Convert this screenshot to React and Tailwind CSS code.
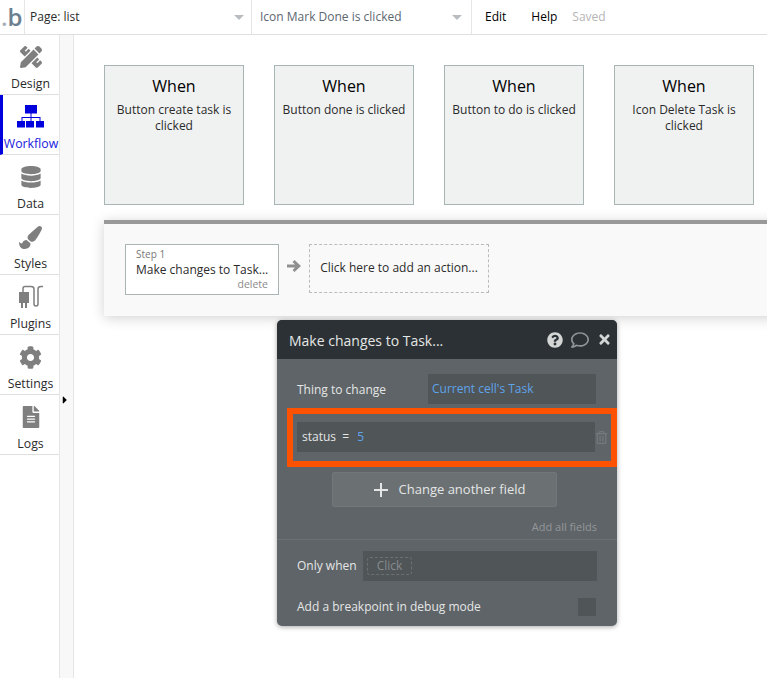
import { FaPencilRuler, FaDatabase, FaPaintBrush, FaCog, FaFileAlt, FaQuestionCircle, FaRegComment, FaTimes, FaRegTrashAlt, FaCaretRight } from "react-icons/fa";

function WorkflowIcon() {
  return (
    <svg width="28" height="24" viewBox="0 0 28 24" fill="#0000dd">
      <rect x="8" y="0" width="12" height="8.500" />
      <path d="M13.500 8h1v4h9v4h-1v-3h-8v3h-1v-3h-8v3h-1v-4h9z" />
      <rect x="0" y="16" width="8" height="6.500" />
      <rect x="9" y="16" width="8" height="6.500" />
      <rect x="19" y="16" width="8" height="6.500" />
    </svg>
  );
}

function PluginIcon() {
  return (
    <svg width="26" height="24" viewBox="0 0 26 24" fill="none">
      <path d="M1 7h10v11H9v5H7v-5H5v5H3v-5H1z" fill="#7f7f7f" />
      <path d="M5 7V3.500Q5 1.500 7 1.500H13Q16 1.500 16 4V19Q16 21 18 21T20 19V4Q20 1.500 23 1.500H25" stroke="#7f7f7f" strokeWidth="1.500" />
    </svg>
  );
}

function ArrowIcon() {
  return (
    <svg width="14" height="14" viewBox="0 0 14 14" fill="#8f8f8f" className="mt-[15px] shrink-0">
      <path d="M7.500 1 14 7l-6.500 6-2-2L8 8.500H0v-3h8L5.500 3z" />
    </svg>
  );
}

function PlusIcon() {
  return (
    <svg width="14" height="14" viewBox="0 0 14 14" fill="#e4e6e6" className="mr-[11px] shrink-0">
      <path d="M6 0h2v6h6v2H8v6H6V8H0V6h6z" />
    </svg>
  );
}

const navItems = [
  { label: "Design", icon: <FaPencilRuler size={22} color="#7f7f7f" /> },
  { label: "Workflow", icon: <WorkflowIcon />, active: true },
  { label: "Data", icon: <FaDatabase size={22} color="#7f7f7f" /> },
  { label: "Styles", icon: <FaPaintBrush size={23} color="#7f7f7f" /> },
  { label: "Plugins", icon: <PluginIcon /> },
  { label: "Settings", icon: <FaCog size={23} color="#7f7f7f" /> },
  { label: "Logs", icon: <FaFileAlt size={22} color="#7f7f7f" /> },
];

const events = [
  "Button create task is clicked",
  "Button done is clicked",
  "Button to do is clicked",
  "Icon Delete Task is clicked",
];

function Caret() {
  return <span className="h-0 w-0 border-x-[5px] border-t-[5px] border-x-transparent border-t-[#b9bdc2]" />;
}

export default function App() {
  return (
    <div className="flex h-[678px] w-[767px] flex-col overflow-hidden bg-white font-['Open_Sans',sans-serif] text-[12px] text-[#2b2b2b]">
      <header className="flex h-[35px] shrink-0 items-center border-b border-[#dfdfdf]">
        <div className="flex h-full w-[25px] items-center border-r border-[#e6e6e6] pl-[1px] text-[24px] leading-none font-semibold text-[#6b7f8f]">
          <span className="text-[#a3adb5]">.</span>b
        </div>
        <div className="flex h-full w-[227px] items-center justify-between border-r border-[#e6e6e6] pr-[7px] pl-[5px]">
          <span>Page: list</span>
          <Caret />
        </div>
        <div className="flex h-full w-[220px] items-center justify-between border-r border-[#e6e6e6] pr-[9px] pl-[8px] text-[#5c6670]">
          <span>Icon Mark Done is clicked</span>
          <Caret />
        </div>
        <span className="ml-[13px] text-black">Edit</span>
        <span className="ml-[25px] text-black">Help</span>
        <span className="ml-[15px] text-[#b5b5b5]">Saved</span>
      </header>

      <div className="flex min-h-0 flex-1">
        <nav className="w-[60px] shrink-0 border-r border-[#e6e6e6]">
          {navItems.map((item) => (
            <div
              key={item.label}
              className={`flex h-[60px] flex-col items-center border-b border-[#dfdfdf] pt-[4px] ${item.active ? "border-l-[3px] border-l-[#0000dd] text-[#2020dd]" : "pl-[2px] text-[#2b2b2b]"}`}
            >
              <div className="flex h-[36px] items-center">{item.icon}</div>
              <span className="text-[12.300px] leading-[17px]">{item.label}</span>
            </div>
          ))}
        </nav>

        <div className="flex w-[14px] shrink-0 items-center border-r border-[#e6e6e6] bg-[#f8f8f8] pb-[5px]">
          <FaCaretRight size={12} color="#000" className="mt-[92px] -ml-[1px]" />
        </div>

        <main className="min-w-0 flex-1 pt-[30px] pl-[30px]">
          <div className="flex gap-[30px]">
            {events.map((event) => (
              <div
                key={event}
                className="flex h-[140px] w-[140px] shrink-0 flex-col items-center border border-[#a9b5b5] bg-[#f0f2f2] px-[4px] pt-[8px] text-center"
              >
                <span className="text-[16px] leading-[24px] text-black">When</span>
                <span className="mt-[4px] leading-[16px]">{event}</span>
              </div>
            ))}
          </div>

          <div className="mt-[15px] flex h-[96px] w-[700px] items-start gap-[8px] border-t-[4px] border-[#999999] bg-[#f9f9f9] pt-[20px] pl-[21px] shadow-[0_2px_12px_rgba(0,0,0,0.18)]">
            <div className="flex h-[51px] w-[154px] shrink-0 flex-col border border-[#a9b5b5] bg-white px-[10px] pt-[3px]">
              <span className="text-[10px] leading-[13px] text-[#777777]">Step 1</span>
              <span className="leading-[17px] whitespace-nowrap">Make changes to Task...</span>
              <span className="text-right text-[10.500px] leading-[13px] text-[#8a8a8a]">delete</span>
            </div>
            <ArrowIcon />
            <div className="flex h-[49px] w-[180px] shrink-0 items-center justify-center border border-dashed border-[#bbbbbb] pb-[2px]">
              Click here to add an action...
            </div>
          </div>

          <section className="mt-[4px] ml-[173px] h-[306px] w-[340px] overflow-hidden rounded-[5px] bg-[#5f6468] text-[#e4e6e6] shadow-[0_1px_5px_rgba(0,0,0,0.35)]">
            <div className="flex h-[39px] items-center bg-[#2b3134] pr-[5px] pl-[12px]">
              <span className="mt-[2px] flex-1 text-[14px]">Make changes to Task...</span>
              <FaQuestionCircle size={16} color="#d4d6d6" />
              <FaRegComment size={18} color="#8f9496" className="ml-[8px]" />
              <FaTimes size={15} color="#d4d6d6" className="ml-[8px]" />
            </div>

            <div className="flex items-center pt-[15px] pl-[20px]">
              <span className="mt-[1px] w-[131px]">Thing to change</span>
              <div className="flex h-[30px] w-[168px] items-center bg-[#505558] px-[4px] text-[#5fa3ea]">Current cell's Task</div>
            </div>

            <div className="mt-[4px] ml-[10px] flex h-[59px] w-[330px] items-center border-[6px] border-[#ff5200] pb-[1px] pl-[4px]">
              <div className="flex h-[30px] w-[298px] items-center bg-[#505558] px-[5px]">
                status&nbsp; =&nbsp;
                <span className="ml-[5px] text-[#5fa3ea]">5</span>
              </div>
              <FaRegTrashAlt size={13} color="#74797c" />
            </div>

            <div className="mt-[5px] ml-[55px] flex h-[35px] w-[225px] items-center justify-center rounded-[2px] border border-[#72777a] bg-[#6b7072] pl-[10px] text-[13px]">
              <PlusIcon />
              Change another field
            </div>

            <div className="mt-[12px] mr-[20px] text-right text-[11px] leading-[15px] text-[#93979a]">Add all fields</div>

            <div className="mt-[5px] border-t border-[#6c7073] pt-[11px] pl-[20px]">
              <div className="flex items-center">
                <span className="w-[66px]">Only when</span>
                <div className="flex h-[30px] w-[234px] items-center bg-[#505558] px-[4px] text-[#888c8f]">
                  <span className="flex h-[18px] w-[45px] items-center justify-center rounded-[3px] border border-dashed border-[#6c7073]">Click</span>
                </div>
              </div>
              <div className="mt-[17px] flex items-center">
                <span className="w-[281px]">Add a breakpoint in debug mode</span>
                <div className="h-[18px] w-[18px] bg-[#505558]" />
              </div>
            </div>
          </section>
        </main>
      </div>
    </div>
  );
}
